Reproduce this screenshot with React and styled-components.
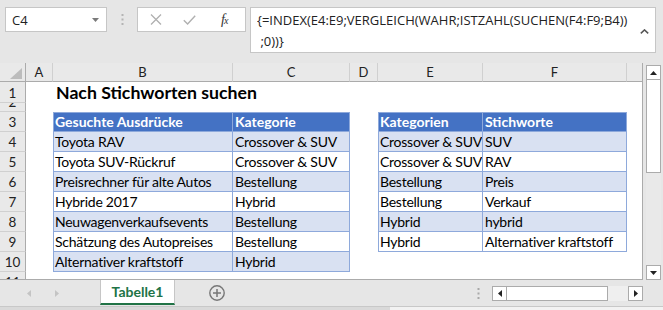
import React from "react";
import styled, { createGlobalStyle } from "styled-components";

const GlobalStyle = createGlobalStyle`
  body {
    margin: 0;
    background: #e6e6e6;
    font-family: "Lato", "Liberation Sans", sans-serif;
  }
`;

const Window = styled.div`
  width: 663px;
  height: 310px;
  overflow: hidden;
  background: #e6e6e6;
  display: flex;
  flex-direction: column;
`;

/* ---------- formula bar ---------- */

const ToolRow = styled.div`
  height: 63px;
  flex: none;
  box-sizing: border-box;
  padding: 7px 0 0 5px;
  display: flex;
  align-items: flex-start;
`;

const NameBox = styled.div`
  width: 102px;
  height: 25px;
  box-sizing: border-box;
  background: #fff;
  border: 1px solid #c6c6c6;
  display: flex;
  align-items: center;
  justify-content: space-between;
  padding: 0 7px 0 6px;
  font: 13px "Open Sans", sans-serif;
  color: #222;
`;

const Grip = styled.div`
  width: 30px;
  height: 25px;
  display: flex;
  align-items: center;
  justify-content: center;
`;

const FxBox = styled.div`
  width: 109px;
  height: 25px;
  box-sizing: border-box;
  background: #fff;
  border: 1px solid #c6c6c6;
  display: flex;
  align-items: center;
  padding-left: 12px;
  gap: 21px;
`;

const Fx = styled.span`
  font: italic 14px "Liberation Serif", serif;
  color: #333;
  margin-left: 4px;
  letter-spacing: -1px;
  sub {
    font-size: 10px;
    vertical-align: 0;
  }
`;

const FormulaBox = styled.div`
  margin-left: 4px;
  width: 406px;
  height: 46px;
  box-sizing: border-box;
  background: #fff;
  border: 1px solid #c6c6c6;
  display: flex;
  padding: 2px 6px 0 6px;
`;

const FormulaText = styled.div`
  flex: 1;
  font: 13px/21px "Open Sans", sans-serif;
  color: #222;
  white-space: pre;
  overflow: hidden;
`;

const Collapse = styled.div`
  padding-top: 8px;
`;

/* ---------- sheet ---------- */

const Main = styled.div`
  height: 217px;
  flex: none;
  display: flex;
`;

const Sheet = styled.div`
  width: 643px;
  height: 217px;
  box-sizing: border-box;
  overflow: hidden;
  background: #fff;
  border-right: 1px solid #ababab;
  border-bottom: 1px solid #ababab;
  display: grid;
  grid-template-columns: 26px 27px 180px 117px 28px 105px 144px 15px;
  grid-template-rows: 19px 21px 9px repeat(9, 20px);
  align-content: start;
  font-family: "Lato", "Liberation Sans", sans-serif;
`;

const Corner = styled.div`
  background: #e9e9e9;
  border-right: 1px solid #ababab;
  border-bottom: 1px solid #ababab;
  box-sizing: border-box;
  display: flex;
  align-items: flex-end;
  justify-content: flex-end;
  padding: 0 3px 2px 0;
`;

const ColHead = styled.div`
  background: #e9e9e9;
  box-sizing: border-box;
  border-bottom: 1px solid #ababab;
  border-right: ${(p) => (p.$last ? "none" : "1px solid #d0d0d0")};
  display: flex;
  align-items: center;
  justify-content: center;
  font-size: 13px;
  color: #222;
`;

const RowHead = styled.div`
  background: #e9e9e9;
  box-sizing: border-box;
  border-right: 1px solid #ababab;
  border-bottom: 1px solid #d0d0d0;
  display: flex;
  align-items: flex-end;
  justify-content: center;
  overflow: hidden;
  font-size: 13.5px;
  line-height: 18px;
  color: #222;
`;

const fills = { head: "#4472c4", band: "#d9e1f2", white: "#fff", none: "#fff" };
const tableLine = "1px solid #8ea9db";

const Cell = styled.div`
  box-sizing: border-box;
  display: flex;
  align-items: flex-end;
  padding: 0 1px 0 ${(p) => (p.$first ? "1px" : "2px")};
  white-space: nowrap;
  overflow: ${(p) => (p.$spill ? "visible" : "hidden")};
  position: ${(p) => (p.$spill ? "relative" : "static")};
  z-index: ${(p) => (p.$spill ? 1 : 0)};
  background: ${(p) => fills[p.$kind]};
  color: ${(p) => (p.$kind === "head" ? "#fff" : "#000")};
  font-size: 14px;
  line-height: 19px;
  letter-spacing: ${(p) => (p.$kind === "head" ? "0" : "-0.25px")};
  font-weight: ${(p) => (p.$kind === "head" ? 700 : 400)};
  border-right: ${(p) => (p.$kind === "none" ? "none" : tableLine)};
  border-bottom: ${(p) => (p.$kind === "none" ? "none" : tableLine)};
  border-left: ${(p) => (p.$first ? tableLine : "none")};
  border-top: ${(p) => (p.$kind === "head" ? tableLine : "none")};
`;

const Title = styled.span`
  font-size: 17.7px;
  font-weight: 700;
  letter-spacing: 0;
  line-height: 20px;
  padding-left: 1px;
`;

const VScroll = styled.div`
  width: 20px;
  box-sizing: border-box;
  padding: 2px 2px 0 3px;
  display: flex;
  flex-direction: column;
`;

const ScrollBtn = styled.div`
  width: 15px;
  height: 15px;
  flex: none;
  box-sizing: border-box;
  background: #fff;
  border: 1px solid #ababab;
  display: flex;
  align-items: center;
  justify-content: center;
`;

const VThumb = styled.div`
  height: 93px;
  flex: none;
  box-sizing: border-box;
  background: #fff;
  border: 1px solid #ababab;
  border-top: none;
`;

const VTrack = styled.div`
  flex: 1;
  background: #e9e9e9;
`;

/* ---------- sheet tabs ---------- */

const TabBar = styled.div`
  height: 26px;
  flex: none;
  display: flex;
  align-items: stretch;
`;

const TabNav = styled.div`
  width: 100px;
  display: flex;
  align-items: center;
  padding-left: 27px;
  gap: 24px;
  box-sizing: border-box;
`;

const Tab = styled.div`
  width: 75px;
  box-sizing: border-box;
  background: #fff;
  border-left: 1px solid #c6c6c6;
  border-right: 1px solid #c6c6c6;
  border-bottom: 2px solid #217346;
  display: flex;
  align-items: center;
  justify-content: center;
  font-size: 14px;
  font-weight: 700;
  color: #217346;
  margin-bottom: 1px;
`;

const AddSheet = styled.div`
  width: 84px;
  display: flex;
  align-items: center;
  padding-left: 34px;
  box-sizing: border-box;
`;

const TabSpacer = styled.div`
  flex: 1;
  display: flex;
  align-items: center;
  justify-content: flex-end;
  padding-right: 12px;
`;

const HScroll = styled.div`
  width: 151px;
  display: flex;
  align-items: center;
  margin-right: 20px;
`;

const HThumb = styled.div`
  width: 101px;
  height: 15px;
  box-sizing: border-box;
  background: #fff;
  border: 1px solid #ababab;
  border-left: none;
`;

const HTrack = styled.div`
  width: 20px;
  height: 15px;
  background: #efefef;
`;

const StatusStrip = styled.div`
  flex: 1;
  display: flex;
  border-top: 1px solid #c8c8c8;
`;

const StripPart = styled.div`
  width: ${(p) => p.$w || "auto"};
  flex: ${(p) => (p.$w ? "none" : 1)};
  background: ${(p) => p.$bg};
`;

/* ---------- data ---------- */

const columns = ["A", "B", "C", "D", "E", "F", ""];

const table1 = [
  ["Gesuchte Ausdrücke", "Kategorie"],
  ["Toyota RAV", "Crossover & SUV"],
  ["Toyota SUV-Rückruf", "Crossover & SUV"],
  ["Preisrechner für alte Autos", "Bestellung"],
  ["Hybride 2017", "Hybrid"],
  ["Neuwagenverkaufsevents", "Bestellung"],
  ["Schätzung des Autopreises", "Bestellung"],
  ["Alternativer kraftstoff", "Hybrid"],
];

const table2 = [
  ["Kategorien", "Stichworte"],
  ["Crossover & SUV", "SUV"],
  ["Crossover & SUV", "RAV"],
  ["Bestellung", "Preis"],
  ["Bestellung", "Verkauf"],
  ["Hybrid", "hybrid"],
  ["Hybrid", "Alternativer kraftstoff"],
];

const rowNumbers = [1, 2, 3, 4, 5, 6, 7, 8, 9, 10, 11];

function cellAt(row, col) {
  const tables = [
    { data: table1, cols: ["B", "C"] },
    { data: table2, cols: ["E", "F"] },
  ];
  for (const t of tables) {
    const idx = row - 3;
    const ci = t.cols.indexOf(col);
    if (ci >= 0 && idx >= 0 && idx < t.data.length) {
      const kind = idx === 0 ? "head" : idx % 2 === 1 ? "band" : "white";
      return { kind, text: t.data[idx][ci], first: ci === 0 };
    }
  }
  return { kind: "none", text: "" };
}

const Tri = ({ dir = "up", color = "#222", size = 7 }) => {
  const pts = {
    up: "0,4 7,4 3.5,0",
    down: "0,0 7,0 3.5,4",
    left: "4,0 4,7 0,3.5",
    right: "0,0 0,7 4,3.5",
  }[dir];
  const vertical = dir === "up" || dir === "down";
  return (
    <svg width={vertical ? size : 4} height={vertical ? 4 : size} viewBox={vertical ? "0 0 7 4" : "0 0 4 7"}>
      <polygon points={pts} fill={color} />
    </svg>
  );
};

const Dots = ({ color = "#b4b4b4" }) => (
  <svg width="3" height="11" viewBox="0 0 3 11">
    <rect x="0.5" y="0" width="2" height="2" fill={color} />
    <rect x="0.5" y="4.5" width="2" height="2" fill={color} />
    <rect x="0.5" y="9" width="2" height="2" fill={color} />
  </svg>
);

export default function App() {
  return (
    <>
      <GlobalStyle />
      <Window>
        <ToolRow>
          <NameBox>
            <span>C4</span>
            <Tri dir="down" color="#7a7a7a" />
          </NameBox>
          <Grip>
            <Dots />
          </Grip>
          <FxBox>
            <svg width="12" height="11" viewBox="0 0 12 11">
              <path d="M1 0.5 L11 10.5 M11 0.5 L1 10.5" stroke="#b0b0b0" strokeWidth="1.3" fill="none" />
            </svg>
            <svg width="13" height="10" viewBox="0 0 13 10">
              <path d="M0.8 5.2 L4.6 9 L12.2 0.8" stroke="#b0b0b0" strokeWidth="1.4" fill="none" />
            </svg>
            <Fx>
              f<sub>x</sub>
            </Fx>
          </FxBox>
          <FormulaBox>
            <FormulaText>
              {"{=INDEX(E4:E9;VERGLEICH(WAHR;ISTZAHL(SUCHEN(F4:F9;B4))\n ;0))}"}
            </FormulaText>
            <Collapse>
              <svg width="9" height="5" viewBox="0 0 9 5">
                <path d="M0.8 4.4 L4.5 0.9 L8.2 4.4" stroke="#555" strokeWidth="1.5" fill="none" />
              </svg>
            </Collapse>
          </FormulaBox>
        </ToolRow>

        <Main>
          <Sheet>
            <Corner>
              <svg width="12" height="11" viewBox="0 0 12 11">
                <polygon points="12,0 12,11 0,11" fill="#bcbcbc" />
              </svg>
            </Corner>
            {columns.map((c, i) => (
              <ColHead key={"h" + i} $last={i === columns.length - 1}>
                {c}
              </ColHead>
            ))}
            {rowNumbers.map((r) => (
              <React.Fragment key={r}>
                <RowHead>{r}</RowHead>
                {columns.map((c, i) => {
                  if (r === 1 && c === "B") {
                    return (
                      <Cell key={c + r} $kind="none" $spill>
                        <Title>Nach Stichworten suchen</Title>
                      </Cell>
                    );
                  }
                  const cell = cellAt(r, c);
                  return (
                    <Cell key={c + r + i} $kind={cell.kind} $first={cell.first}>
                      {cell.text}
                    </Cell>
                  );
                })}
              </React.Fragment>
            ))}
          </Sheet>
          <VScroll>
            <ScrollBtn>
              <Tri dir="up" />
            </ScrollBtn>
            <VThumb />
            <VTrack />
            <ScrollBtn>
              <Tri dir="down" />
            </ScrollBtn>
          </VScroll>
        </Main>

        <TabBar>
          <TabNav>
            <Tri dir="left" color="#c4c4c4" />
            <Tri dir="right" color="#c4c4c4" />
          </TabNav>
          <Tab>Tabelle1</Tab>
          <AddSheet>
            <svg width="16" height="16" viewBox="0 0 16 16">
              <circle cx="8" cy="8" r="7.2" stroke="#777" strokeWidth="1.4" fill="none" />
              <path d="M8 4 V12 M4 8 H12" stroke="#777" strokeWidth="1.5" />
            </svg>
          </AddSheet>
          <TabSpacer>
            <Dots color="#a8a8a8" />
          </TabSpacer>
          <HScroll>
            <ScrollBtn>
              <Tri dir="left" />
            </ScrollBtn>
            <HThumb />
            <HTrack />
            <ScrollBtn>
              <Tri dir="right" />
            </ScrollBtn>
          </HScroll>
        </TabBar>
        <StatusStrip>
          <StripPart $w="390px" $bg="#d9d9d9" />
          <StripPart $bg="#f2f2f2" />
        </StatusStrip>
      </Window>
    </>
  );
}
